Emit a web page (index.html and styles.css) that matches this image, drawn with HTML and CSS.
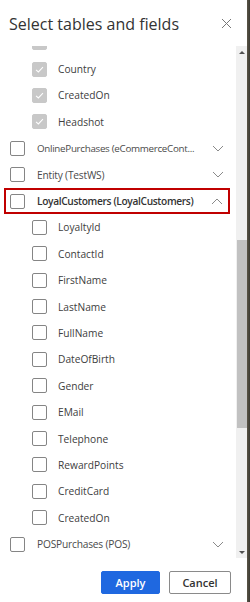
FILE: index.html
```html
<!DOCTYPE html>
<html lang="en">
<head>
    <meta charset="UTF-8">
    <meta name="viewport" content="width=device-width, initial-scale=1.0">
    <title>Select tables and fields</title>
    <link rel="stylesheet" href="styles.css">
</head>
<body>
    <div class="panel">
        <div class="header">
            <h1>Select tables and fields</h1>
            <svg class="close" width="11" height="11" viewBox="0 0 11 11"><path d="M1 1L10 10M10 1L1 10" stroke="#777" stroke-width="1" fill="none"/></svg>
        </div>

        <div class="list-area">
            <div class="list">
                <div class="list-inner">
                    <div class="row child"><span class="box checked"></span></div>
                    <div class="row child"><span class="box checked"><svg viewBox="0 0 15 15"><path d="M3.5 7.8L6.2 10.3L11.5 4.8" stroke="#fff" stroke-width="1.2" fill="none"/></svg></span><span class="label">Country</span></div>
                    <div class="row child"><span class="box checked"><svg viewBox="0 0 15 15"><path d="M3.5 7.8L6.2 10.3L11.5 4.8" stroke="#fff" stroke-width="1.2" fill="none"/></svg></span><span class="label">CreatedOn</span></div>
                    <div class="row child"><span class="box checked"><svg viewBox="0 0 15 15"><path d="M3.5 7.8L6.2 10.3L11.5 4.8" stroke="#fff" stroke-width="1.2" fill="none"/></svg></span><span class="label">Headshot</span></div>

                    <div class="row table"><span class="box"></span><span class="label long">OnlinePurchases (eCommerceCont...</span>
                        <svg class="chev" width="12" height="7" viewBox="0 0 12 7"><path d="M1 1L6 6L11 1" stroke="#8a8a8a" fill="none"/></svg></div>
                    <div class="row table"><span class="box"></span><span class="label">Entity (TestWS)</span>
                        <svg class="chev" width="12" height="7" viewBox="0 0 12 7"><path d="M1 1L6 6L11 1" stroke="#8a8a8a" fill="none"/></svg></div>
                    <div class="row table selected"><span class="box"></span><span class="label">LoyalCustomers (LoyalCustomers)</span>
                        <svg class="chev" width="12" height="7" viewBox="0 0 12 7"><path d="M1 6L6 1L11 6" stroke="#8a8a8a" fill="none"/></svg></div>

                    <div class="row child"><span class="box"></span><span class="label">LoyaltyId</span></div>
                    <div class="row child"><span class="box"></span><span class="label">ContactId</span></div>
                    <div class="row child"><span class="box"></span><span class="label">FirstName</span></div>
                    <div class="row child"><span class="box"></span><span class="label">LastName</span></div>
                    <div class="row child"><span class="box"></span><span class="label">FullName</span></div>
                    <div class="row child"><span class="box"></span><span class="label">DateOfBirth</span></div>
                    <div class="row child"><span class="box"></span><span class="label">Gender</span></div>
                    <div class="row child"><span class="box"></span><span class="label">EMail</span></div>
                    <div class="row child"><span class="box"></span><span class="label">Telephone</span></div>
                    <div class="row child"><span class="box"></span><span class="label">RewardPoints</span></div>
                    <div class="row child"><span class="box"></span><span class="label">CreditCard</span></div>
                    <div class="row child"><span class="box"></span><span class="label">CreatedOn</span></div>

                    <div class="row table"><span class="box"></span><span class="label">POSPurchases (POS)</span>
                        <svg class="chev" width="12" height="7" viewBox="0 0 12 7"><path d="M1 1L6 6L11 1" stroke="#8a8a8a" fill="none"/></svg></div>
                </div>
            </div>
            <div class="scrollbar">
                <div class="arrow up"></div>
                <div class="track">
                    <div class="thumb"></div>
                </div>
                <div class="arrow down"></div>
            </div>
        </div>

        <div class="footer">
            <button class="btn primary">Apply</button>
            <button class="btn">Cancel</button>
        </div>
    </div>
    <div class="edge"></div>
</body>
</html>
```

FILE: styles.css
```css
body {
    margin: 0;
    font-family: "Open Sans", "Noto Sans", Arial, sans-serif;
    background-color: #fff;
    color: #333;
    display: flex;
    height: 602px;
    overflow: hidden;
}
.panel {
    width: 247px;
    display: flex;
    flex-direction: column;
    background: #fff;
}
.edge {
    width: 3px;
    background: linear-gradient(90deg, #5a5446, #3b3a33);
}

.header {
    height: 46px;
    display: flex;
    align-items: flex-start;
    justify-content: space-between;
    padding: 0 15px 0 9px;
}
h1 {
    margin: 13px 0 0;
    font-size: 16px;
    font-weight: 400;
    color: #333;
}
.close {
    margin-top: 18px;
}

.list-area {
    height: 512px;
    display: flex;
}
.list {
    flex: 1;
    overflow: hidden;
}
.list-inner {
    margin-top: -16.5px;
}
.row {
    height: 26.4px;
    display: flex;
    align-items: center;
    font-size: 10.2px;
    color: #404040;
}
.row.child {
    padding-left: 32px;
}
.row.table {
    padding-left: 10px;
    color: #4a4a4a;
}
.row.selected {
    margin: 0 6px 0 4px;
    padding-left: 6px;
    box-shadow: inset 0 0 0 2px #c00000;
    font-weight: 600;
    color: #333;
}
.box {
    width: 15px;
    height: 15px;
    box-sizing: border-box;
    border: 1px solid #858585;
    border-radius: 2px;
    flex-shrink: 0;
    display: flex;
}
.box.checked {
    background: #c8c8c8;
    border-color: #c8c8c8;
}
.box svg {
    width: 100%;
    height: 100%;
}
.row.child .label {
    margin-left: 11px;
}
.row.table .label {
    margin-left: 12px;
    flex: 1;
    white-space: nowrap;
    letter-spacing: -0.2px;
}
.row.table .label.long {
    font-size: 9.8px;
    letter-spacing: -0.3px;
}
.row.selected .label {
    letter-spacing: -0.35px;
}
.chev {
    flex-shrink: 0;
    margin-right: 12px;
}
.row.selected .chev {
    margin-right: 7px;
}

.scrollbar {
    width: 11px;
    background: #f0f0f0;
    display: flex;
    flex-direction: column;
}
.arrow {
    height: 12px;
    display: flex;
    align-items: center;
    justify-content: center;
}
.arrow::after {
    content: "";
    border-left: 3px solid transparent;
    border-right: 3px solid transparent;
}
.arrow.up::after {
    border-bottom: 3px solid #505050;
}
.arrow.down::after {
    border-top: 3px solid #505050;
}
.track {
    flex: 1;
    padding-top: 182px;
}
.thumb {
    margin-left: 1px;
    width: 10px;
    height: 188px;
    background: #c1c1c1;
}

.footer {
    flex: 1;
    display: flex;
    justify-content: flex-end;
    align-items: flex-start;
    gap: 9px;
    padding: 13px 16px 0 0;
}
.btn {
    height: 23px;
    padding: 0;
    border: 1px solid #8a8a8a;
    border-radius: 2px;
    background: #fff;
    color: #333;
    font-family: "Open Sans", "Noto Sans", Arial, sans-serif;
    font-size: 11px;
    font-weight: 600;
    width: 62px;
}
.btn.primary {
    background: #1f68e0;
    border-color: #1f68e0;
    color: #fff;
    width: 59px;
}
```
